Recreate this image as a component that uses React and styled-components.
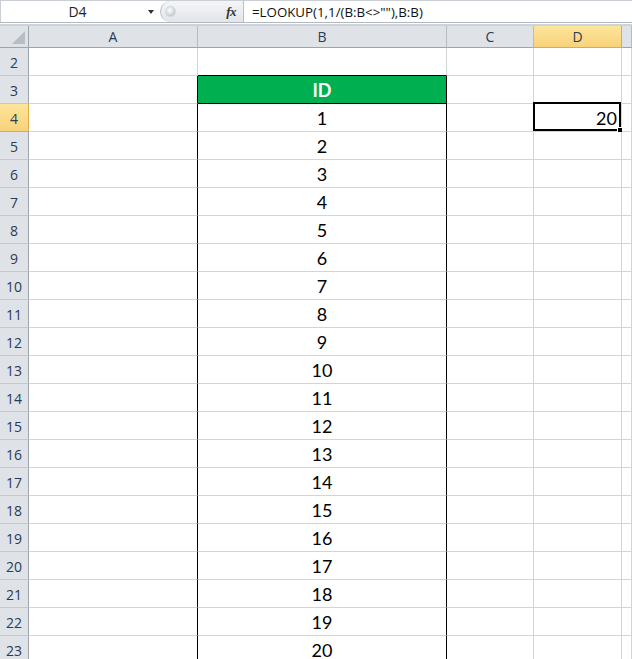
import styled, { createGlobalStyle, css } from "styled-components";

const GlobalStyle = createGlobalStyle`
  html, body { margin: 0; padding: 0; background: #fff; }
  body { font-family: Lato, "Open Sans", sans-serif; overflow: hidden; }
`;

const GRID = "#d4d4d4";
const INK = "#000";

// column layout of the sheet (widths include the right gridline)
const COLUMNS = ["A", "B", "C", "D", ""];
const ROWS = Array.from({ length: 22 }, (_, i) => i + 2);

const valueOf = (row, col) => {
  if (col === "B" && row === 3) return "ID";
  if (col === "B" && row >= 4) return String(row - 3);
  if (col === "D" && row === 4) return "20";
  return "";
};

export default function App() {
  return (
    <>
      <GlobalStyle />
      <Window>
        <FormulaBar>
          <NameBox>
            <NameText>D4</NameText>
            <Caret />
          </NameBox>
          <Splitter>
            <Knob />
            <Fx>fx</Fx>
          </Splitter>
          <FormulaInput>=LOOKUP(1,1/(B:B&lt;&gt;""),B:B)</FormulaInput>
        </FormulaBar>
        <BarGap />
        <Sheet>
          <Corner>
            <CornerTriangle />
          </Corner>
          {COLUMNS.map((c) => (
            <ColHeader key={c || "E"} $active={c === "D"}>
              {c}
            </ColHeader>
          ))}
          {ROWS.map((row) => (
            <Row key={row} row={row} />
          ))}
        </Sheet>
      </Window>
    </>
  );
}

const Row = ({ row }) => (
  <>
    <RowHeader $active={row === 4}>{row}</RowHeader>
    {COLUMNS.map((col) => {
      const isTable = row >= 3;
      const right =
        (col === "A" || col === "B") && isTable ? INK : GRID;
      const bottom = col === "B" && (row === 2 || row === 3) ? INK : GRID;
      const head = col === "B" && row === 3;
      return (
        <Cell
          key={col || "E"}
          $right={right}
          $bottom={bottom}
          $head={head}
          $align={col === "D" ? "flex-end" : "center"}
        >
          {valueOf(row, col)}
          {col === "D" && row === 4 && (
            <Selection>
              <FillHandle />
            </Selection>
          )}
        </Cell>
      );
    })}
  </>
);

const Window = styled.div`
  width: 632px;
  height: 659px;
  overflow: hidden;
  background: #fff;
`;

const FormulaBar = styled.div`
  display: flex;
  height: 23px;
  box-sizing: border-box;
  border-top: 1px solid #c9ced5;
  border-bottom: 1px solid #b2b8c0;
  border-left: 1px solid #c9ced5;
  background: #fff;
`;

const NameBox = styled.div`
  width: 158px;
  display: flex;
  align-items: center;
  font-family: "Open Sans", sans-serif;
  font-size: 14px;
  color: #222;
`;

const NameText = styled.span`
  flex: 1;
  text-align: center;
  padding-left: 6px;
`;

const Caret = styled.span`
  width: 0;
  height: 0;
  margin-right: 5px;
  border-left: 3.5px solid transparent;
  border-right: 3.5px solid transparent;
  border-top: 4px solid #333;
`;

const Splitter = styled.div`
  width: 84px;
  display: flex;
  align-items: center;
  justify-content: space-between;
  box-sizing: border-box;
  margin: 0 0 0 1px;
  padding: 0 7px 0 4px;
  background: linear-gradient(#f4f5f7, #e2e5e9);
  border: 1px solid #b9bfc7;
  border-width: 0 1px 0 1px;
  border-radius: 11px 0 0 11px;
`;

const Knob = styled.span`
  width: 9px;
  height: 9px;
  border-radius: 50%;
  background: radial-gradient(circle at 40% 35%, #fff, #c9cdd3 70%);
  border: 1px solid #d2d6db;
`;

const Fx = styled.span`
  font-family: "Liberation Serif", serif;
  font-style: italic;
  font-weight: bold;
  font-size: 13px;
  color: #333;
  letter-spacing: -0.5px;
`;

const FormulaInput = styled.div`
  flex: 1;
  display: flex;
  align-items: center;
  padding-left: 8px;
  font-family: "Open Sans", sans-serif;
  font-size: 13.3px;
  color: #111;
  white-space: nowrap;
`;

const BarGap = styled.div`
  height: 1px;
  border-bottom: 2px solid #cfd3d8;
`;

const Sheet = styled.div`
  display: grid;
  grid-template-columns: 29px 169px 249px 87px 88px 1fr;
  grid-template-rows: 22px;
  grid-auto-rows: 28px;
`;

const headerBase = css`
  box-sizing: border-box;
  display: flex;
  justify-content: center;
  align-items: flex-end;
  font-family: "Open Sans", sans-serif;
  font-size: 14px;
  line-height: 1;
  color: #2a3b56;
  background: #dfe3e8;
`;

const activeHeader = css`
  background: linear-gradient(#fde59b, #f8d27a);
  border-color: #e2a94a;
`;

const Corner = styled.div`
  ${headerBase};
  position: relative;
  border-right: 1px solid #9ea4ab;
  border-bottom: 1px solid #9ea4ab;
`;

const CornerTriangle = styled.span`
  position: absolute;
  right: 3px;
  bottom: 3px;
  width: 0;
  height: 0;
  border-left: 13px solid transparent;
  border-bottom: 13px solid #b8bdc3;
`;

const ColHeader = styled.div`
  ${headerBase};
  padding-bottom: 3px;
  border-right: 1px solid #b7bcc2;
  border-bottom: 1px solid #9ea4ab;
  ${(p) => p.$active && activeHeader};
`;

const RowHeader = styled.div`
  ${headerBase};
  padding-bottom: 5px;
  border-right: 1px solid #9ea4ab;
  border-bottom: 1px solid #c4c8ce;
  ${(p) => p.$active && activeHeader};
`;

const Cell = styled.div`
  box-sizing: border-box;
  position: relative;
  display: flex;
  justify-content: ${(p) => p.$align};
  align-items: flex-end;
  padding: 0 4px 3px;
  border-right: 1px solid ${(p) => p.$right};
  border-bottom: 1px solid ${(p) => p.$bottom};
  background: ${(p) => (p.$head ? "#00b050" : "#fff")};
  color: ${(p) => (p.$head ? "#fff" : "#000")};
  font-weight: ${(p) => (p.$head ? 700 : 400)};
  font-size: 18px;
  line-height: 20px;
`;

const Selection = styled.div`
  position: absolute;
  left: -1px;
  top: -2px;
  right: 0;
  bottom: 0;
  border: 2px solid #000;
`;

const FillHandle = styled.span`
  position: absolute;
  right: -5px;
  bottom: -5px;
  width: 5px;
  height: 5px;
  background: #000;
  border: 1px solid #fff;
`;
